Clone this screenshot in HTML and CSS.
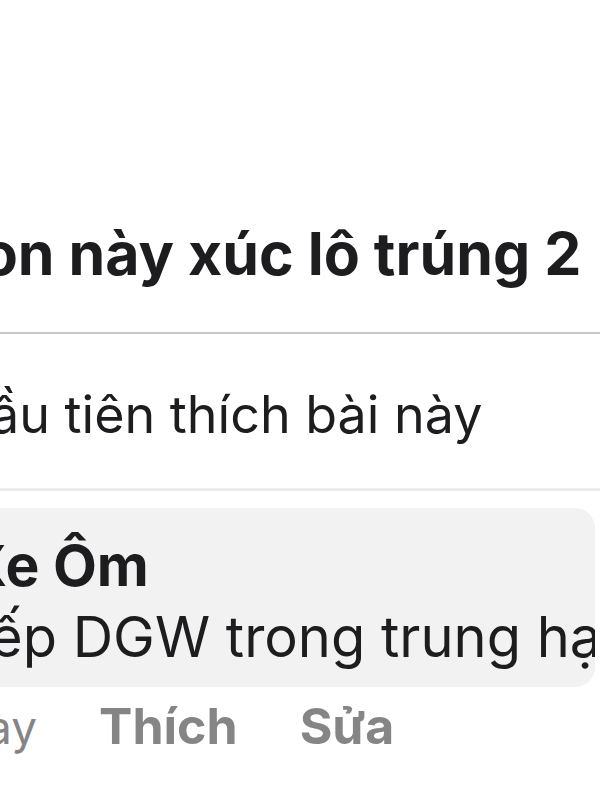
FILE: index.html
```html
<!DOCTYPE html>
<html lang="vi">
<head>
    <meta charset="UTF-8">
    <meta name="viewport" content="width=device-width, initial-scale=1.0">
    <title>Bình luận</title>
    <link rel="stylesheet" href="styles.css">
</head>
    <body>
        <div class="post-title">Con này xúc lô trúng 2</div>
        <div class="divider"></div>

        <div class="likes">ầu tiên thích bài này</div>
        <div class="divider light"></div>

        <div class="comment">
            <div class="bubble">
                <div class="name">Xe Ôm</div>
                <div class="text">ếp DGW trong trung hạn</div>
            </div>
            <div class="actions">
                <span class="time">ày</span>
                <span class="action">Thích</span>
                <span class="action">Sửa</span>
            </div>
        </div>
    </body>
</html>
```

FILE: styles.css
```css
body {
    margin: 0;
    background-color: #fff;
    font-family: Inter, "Noto Sans", sans-serif;
    color: #1d1d1f;
    overflow: hidden;
}

/* only the end of the title is in view */
.post-title {
    font-size: 59px;
    font-weight: 700;
    line-height: 72px;
    padding-top: 218px;
    padding-bottom: 42px;
    text-indent: -62px;
    white-space: nowrap;
    overflow: hidden;
}

.divider {
    height: 2px;
    background-color: #c8c8c8;
}

    .divider.light {
        height: 3px;
        background-color: #ebebeb;
    }

.likes {
    font-size: 52px;
    line-height: 60px;
    padding-top: 51px;
    padding-bottom: 43px;
    margin-left: -10px;
    white-space: nowrap;
}

.comment {
    padding-top: 17px;
}

.bubble {
    background-color: #f2f2f2;
    margin-right: 5px;
    padding: 26px 0 15px;
    border-radius: 0 20px 20px 0;
    overflow: hidden;
}

.name {
    font-size: 57px;
    font-weight: 700;
    line-height: 64px;
    margin-left: -35px;
    white-space: nowrap;
}

.text {
    font-size: 56px;
    line-height: 70px;
    margin-top: 4px;
    margin-left: -10px;
    white-space: nowrap;
}

.actions {
    display: flex;
    align-items: baseline;
    gap: 62px;
    margin-top: 1px;
    color: #858585;
    font-size: 50px;
    line-height: 76px;
    margin-left: -14px;
    white-space: nowrap;
}

    .actions .time {
        font-size: 46px;
    }

    .actions .action {
        font-weight: 700;
    }
```
